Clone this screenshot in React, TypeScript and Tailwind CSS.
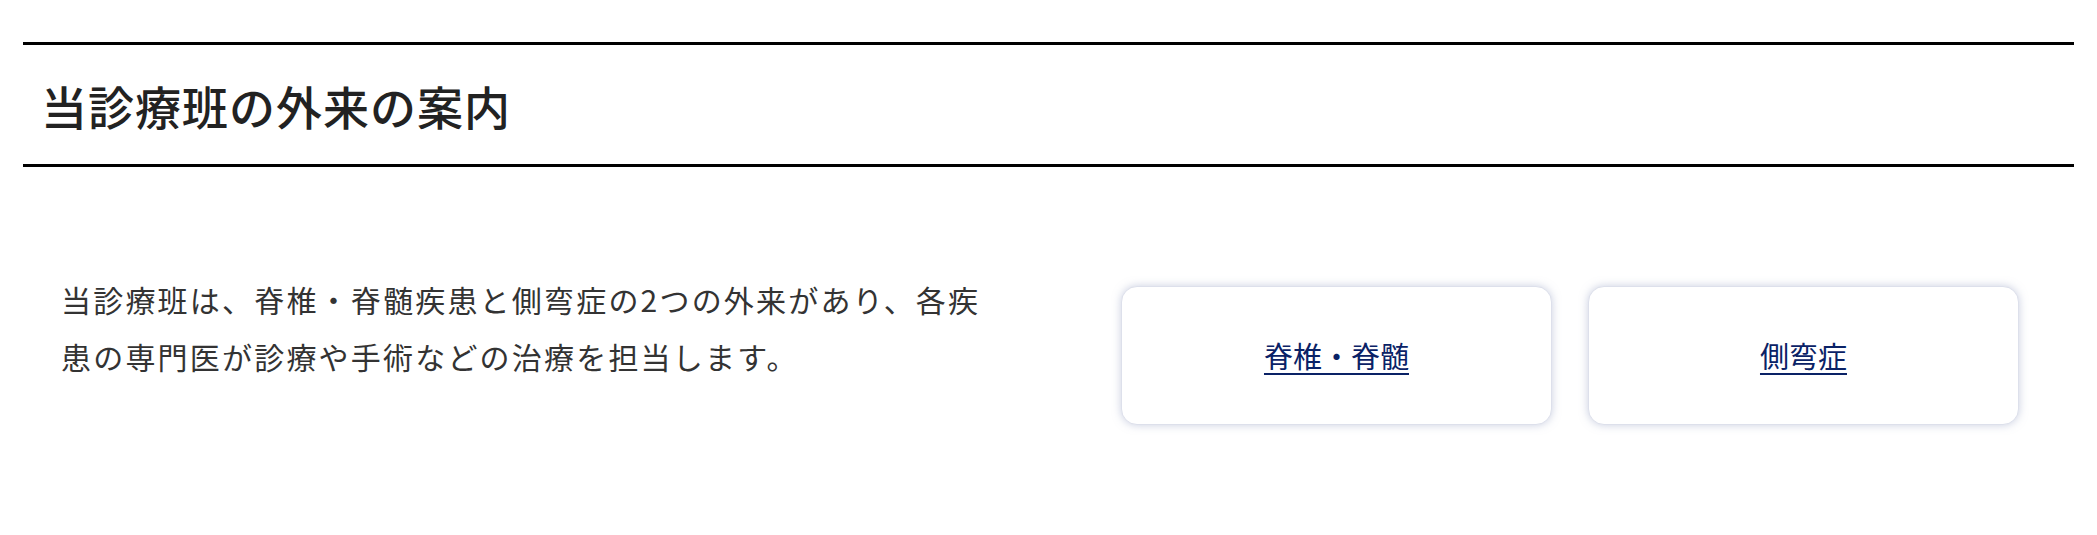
import React from "react";

const font = { fontFamily: '"Noto Sans CJK JP", "Noto Sans", sans-serif' };

function Card({ label }: { label: string }) {
  return (
    <a
      href="#"
      className="flex h-[139px] w-[431px] items-center justify-center rounded-[16px] border border-[#dde0eb] bg-white pt-[1px] text-[29px] text-[#0a2266] underline decoration-[2px] underline-offset-[5px] shadow-[0_0_9px_rgba(150,160,195,0.5)]"
    >
      {label}
    </a>
  );
}

export default function App() {
  return (
    <div className="h-[535px] w-full bg-white" style={font}>
      <div className="mx-[23px] pt-[42px]">
        <div className="flex h-[125px] items-center border-y-[3px] border-black pl-[18px]">
          <h2 className="text-[46px] font-medium leading-none tracking-[1px] text-[#222222]">
            当診療班の外来の案内
          </h2>
        </div>
        <div className="flex items-start pl-[38px] pt-[104px]">
          <p className="w-[935px] text-[30px] leading-[57px] tracking-[2.2px] text-[#333333]">
            当診療班は、脊椎・脊髄疾患と側弯症の2つの外来があり、各疾患の専門医が診療や手術などの治療を担当します。
          </p>
          <div className="ml-auto mr-[55px] mt-[15px] flex gap-[36px]">
            <Card label="脊椎・脊髄" />
            <Card label="側弯症" />
          </div>
        </div>
      </div>
    </div>
  );
}
